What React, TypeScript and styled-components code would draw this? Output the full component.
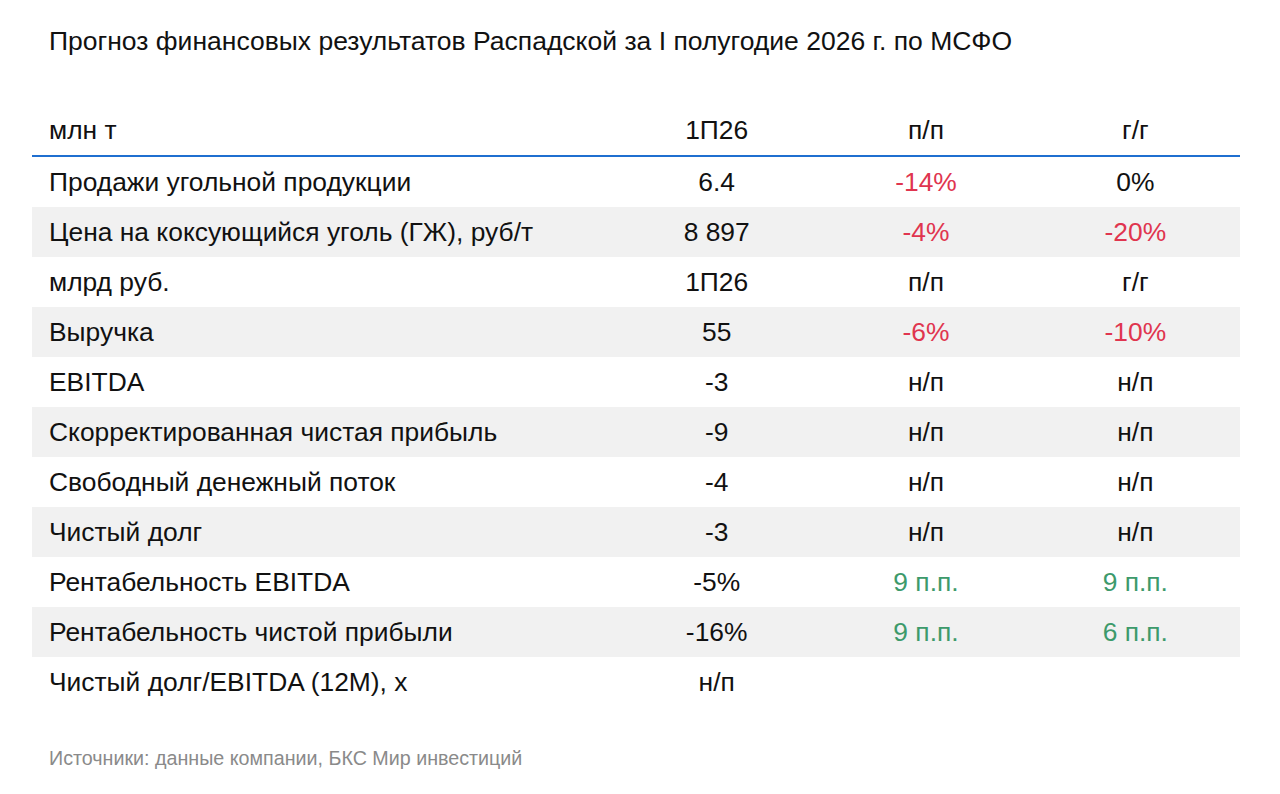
import React from "react";
import styled, { createGlobalStyle } from "styled-components";

type Tone = "plain" | "neg" | "pos";

interface cell {
  text: string;
  tone?: Tone;
}

interface row {
  label: string;
  cells: cell[];
}

const rows: row[] = [
  { label: "Продажи угольной продукции", cells: [{ text: "6.4" }, { text: "-14%", tone: "neg" }, { text: "0%" }] },
  { label: "Цена на коксующийся уголь (ГЖ), руб/т", cells: [{ text: "8 897" }, { text: "-4%", tone: "neg" }, { text: "-20%", tone: "neg" }] },
  { label: "млрд руб.", cells: [{ text: "1П26" }, { text: "п/п" }, { text: "г/г" }] },
  { label: "Выручка", cells: [{ text: "55" }, { text: "-6%", tone: "neg" }, { text: "-10%", tone: "neg" }] },
  { label: "EBITDA", cells: [{ text: "-3" }, { text: "н/п" }, { text: "н/п" }] },
  { label: "Скорректированная чистая прибыль", cells: [{ text: "-9" }, { text: "н/п" }, { text: "н/п" }] },
  { label: "Свободный денежный поток", cells: [{ text: "-4" }, { text: "н/п" }, { text: "н/п" }] },
  { label: "Чистый долг", cells: [{ text: "-3" }, { text: "н/п" }, { text: "н/п" }] },
  { label: "Рентабельность EBITDA", cells: [{ text: "-5%" }, { text: "9 п.п.", tone: "pos" }, { text: "9 п.п.", tone: "pos" }] },
  { label: "Рентабельность чистой прибыли", cells: [{ text: "-16%" }, { text: "9 п.п.", tone: "pos" }, { text: "6 п.п.", tone: "pos" }] },
  { label: "Чистый долг/EBITDA (12M), x", cells: [{ text: "н/п" }, { text: "" }, { text: "" }] },
];

const toneColors: Record<Tone, string> = {
  plain: "#111111",
  neg: "#e0354f",
  pos: "#3d9a6b",
};

export default function App() {
  return (
    <>
      <GlobalStyle />
      <Page>
        <Title>Прогноз финансовых результатов Распадской за I полугодие 2026 г. по МСФО</Title>
        <Table>
          <HeaderRow>
            <Label>млн т</Label>
            <Value>1П26</Value>
            <Value>п/п</Value>
            <Value>г/г</Value>
          </HeaderRow>
          {rows.map((r, index) => (
            <Row key={index} $shaded={index % 2 === 1}>
              <Label>{r.label}</Label>
              {r.cells.map((c, i) => (
                <Value key={i} $tone={c.tone}>
                  {c.text}
                </Value>
              ))}
            </Row>
          ))}
        </Table>
        <Source>Источники: данные компании, БКС Мир инвестиций</Source>
      </Page>
    </>
  );
}

const GlobalStyle = createGlobalStyle`
  body {
    margin: 0;
    background: #ffffff;
    font-family: "Liberation Sans", Arial, sans-serif;
    color: #111111;
  }
`;

const Page = styled.div`
  width: 1280px;
  height: 794px;
  padding: 26px 40px 0 32px;
  box-sizing: border-box;
`;

const Title = styled.h1`
  margin: 0 0 0 17px;
  font-size: 26.5px;
  line-height: 30px;
  font-weight: normal;
  color: #111111;
  white-space: nowrap;
`;

const Table = styled.div`
  margin-top: 49px;
  width: 1208px;
  display: flex;
  flex-direction: column;
`;

const Row = styled.div<{ $shaded?: boolean }>`
  display: grid;
  grid-template-columns: 580px repeat(3, 1fr);
  align-items: center;
  height: 50px;
  background-color: ${(props) => (props.$shaded ? "#f1f1f1" : "transparent")};
`;

const HeaderRow = styled(Row)`
  height: 50px;
  border-bottom: 2px solid #1f6fd0;
`;

const Label = styled.div`
  padding-left: 17px;
  font-size: 26.4px;
  white-space: nowrap;
`;

const Value = styled.div<{ $tone?: Tone }>`
  text-align: center;
  font-size: 26.4px;
  color: ${(props) => toneColors[props.$tone ?? "plain"]};
`;

const Source = styled.p`
  margin: 39px 0 0 17px;
  font-size: 19.7px;
  line-height: 24px;
  color: #8a8a8a;
`;
